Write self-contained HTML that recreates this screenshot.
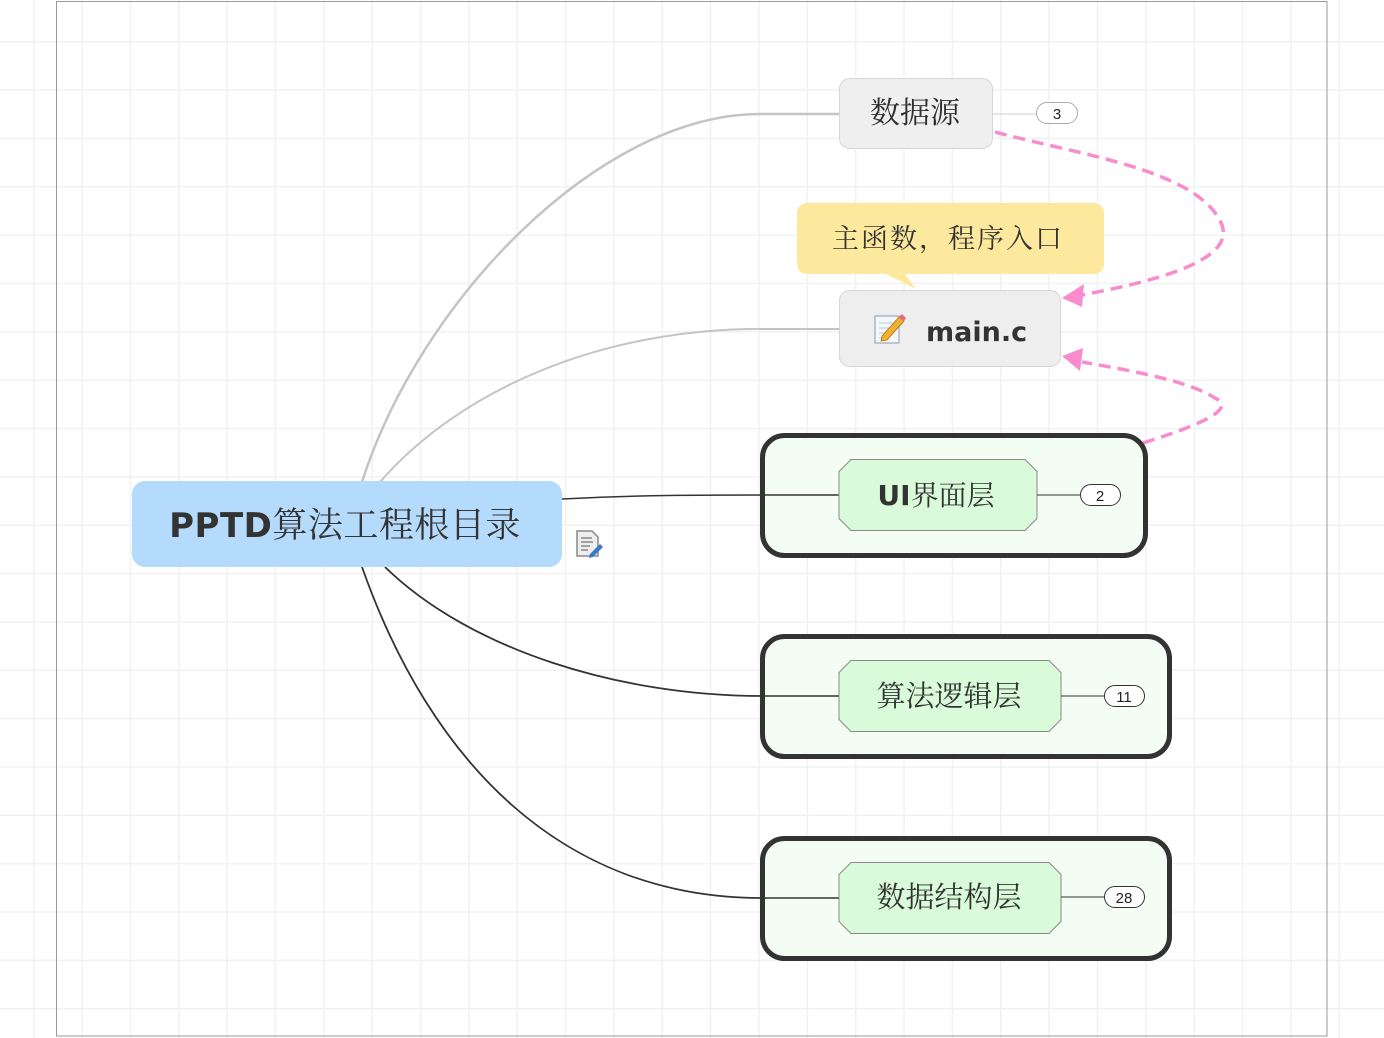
<!DOCTYPE html>
<html><head><meta charset="utf-8"><style>
html,body{margin:0;padding:0;background:#fff;}
svg{display:block}
.cjk{font-family:"Liberation Serif","Noto Serif CJK SC","Noto Serif CJK JP","AR PL UMing CN",serif;fill:#333}
</style></head><body>
<svg width="1384" height="1038" viewBox="0 0 1384 1038" xmlns="http://www.w3.org/2000/svg">
<defs>
<pattern id="g" x="33" y="41" width="48.35" height="48.35" patternUnits="userSpaceOnUse">
<path d="M0 0V48.35M0 0H48.35" stroke="#f0f2f2" stroke-width="3" fill="none"/>
</pattern>
</defs>
<rect width="1384" height="1038" fill="#fff"/>
<rect x="-1" y="-1" width="1390" height="1045" fill="url(#g)"/>
<rect x="56.5" y="1.5" width="1270.5" height="1034.5" fill="none" stroke="#999" stroke-width="1"/>

<path d="M362 482 C420 300 600 114 760 114 L839 114" stroke="#c4c4c4" stroke-width="2.5" fill="none"/>
<path d="M380 482 C460 390 600 329 760 329 L839 329" stroke="#c4c4c4" stroke-width="2" fill="none"/>
<path d="M562 499 C640 495 700 495 762 495 L839 495" stroke="#333" stroke-width="1.5" fill="none"/>
<path d="M385 567 C470 650 620 696 762 696 L839 696" stroke="#333" stroke-width="1.8" fill="none"/>
<path d="M362 567 C430 760 560 898 762 898 L839 898" stroke="#333" stroke-width="1.8" fill="none"/>
<path d="M993 114 H1036" stroke="#ccc" stroke-width="1"/>

<rect x="132" y="481" width="430" height="86" rx="13" fill="#b4dafc"/>
<text x="345" y="537" text-anchor="middle" font-size="34" font-weight="bold" style="font-family:'DejaVu Sans','Noto Sans CJK SC',sans-serif" fill="#333" letter-spacing="0.5">PPTD<tspan font-weight="normal" font-size="35" style="font-family:'Liberation Serif','Noto Serif CJK SC','Noto Serif CJK JP',serif">算法工程根目录</tspan></text>
<g transform="translate(576,530)">
<path d="M1 1h15l6 6v19H1z" fill="#eee" stroke="#888" stroke-width="1.5"/>
<path d="M5 8h11M5 12h12M5 16h9M5 20h7" stroke="#888" stroke-width="1.5"/>
<path d="M14 24l10-10 3 3-10 10-4 1z" fill="#3a78c8"/>
</g>

<rect x="839.5" y="78.5" width="153" height="70" rx="10" fill="#efefef" stroke="#d6d6d6"/>
<text x="915" y="123" text-anchor="middle" font-size="30" class="cjk" style="fill:#2f2f2f">数据源</text>
<rect x="1036.5" y="102.5" width="41" height="21" rx="10.5" fill="#fff" stroke="#aaa"/>
<text x="1057" y="119" text-anchor="middle" font-size="15" font-family="Liberation Sans,sans-serif" fill="#222">3</text>

<path d="M807 203 H1094 a10 10 0 0 1 10 10 V264 a10 10 0 0 1 -10 10 H905 L916 289 L886 274 H807 a10 10 0 0 1 -10 -10 V213 a10 10 0 0 1 10 -10z" fill="#fde99d"/>
<text x="948" y="248" text-anchor="middle" font-size="27" class="cjk" letter-spacing="2">主函数，程序入口</text>

<rect x="839.5" y="290.5" width="221" height="76" rx="10" fill="#eeeeee" stroke="#d6d6d6"/>
<g transform="translate(875,313)">
<rect x="0" y="3" width="24" height="27" fill="#f4f8fc" stroke="#9ab" stroke-width="1.2"/>
<path d="M4 10h14M4 15h14M4 20h12M4 25h10" stroke="#bcc" stroke-width="1"/>
<path d="M7 23 L24 4 L29 8 L12 27 L6 28z" fill="#f0b030" stroke="#b07010" stroke-width="0.8"/>
<path d="M24 4 L27 1 L31 5 L29 8z" fill="#e76a8a"/>
</g>
<text x="926" y="341" font-size="27" font-weight="bold" font-family="DejaVu Sans,sans-serif" fill="#333">main.c</text>

<path d="M995 132 C1080 155 1200 170 1222 225 C1235 262 1150 282 1082 295" stroke="#f98ccd" stroke-width="3.5" stroke-dasharray="12 7" fill="none"/>
<path d="M1062 298 L1084 284 L1082 307z" fill="#f98ccd"/>
<path d="M1143 443 C1190 428 1240 410 1215 398 C1190 382 1140 372 1082 362" stroke="#f98ccd" stroke-width="3.5" stroke-dasharray="12 7" fill="none"/>
<path d="M1062 356 L1083 348 L1080 371z" fill="#f98ccd"/>

<rect x="762.5" y="435.5" width="383" height="120" rx="22" fill="#f3fdf3" stroke="#333" stroke-width="5"/>
<path d="M762 495 H839" stroke="#333" stroke-width="1.5"/>
<path d="M851 459.5 H1025 L1037 471.5 V518.5 L1025 530.5 H851 L839 518.5 V471.5z" fill="#d9fbd9" stroke="#8a8a8a"/>
<text x="936" y="505" text-anchor="middle" font-size="28" font-weight="bold" font-family="DejaVu Sans,sans-serif" fill="#333">UI<tspan font-weight="normal" style="font-family:'Liberation Serif','Noto Serif CJK SC','Noto Serif CJK JP',serif">界面层</tspan></text>
<path d="M1037 495 H1080" stroke="#333" stroke-width="1"/>
<rect x="1080.5" y="484.5" width="40" height="21" rx="10.5" fill="#fff" stroke="#333"/>
<text x="1100" y="501" text-anchor="middle" font-size="15" font-family="Liberation Sans,sans-serif" fill="#222">2</text>

<rect x="762.5" y="636.5" width="407" height="120" rx="22" fill="#f3fdf3" stroke="#333" stroke-width="5"/>
<path d="M762 696 H839" stroke="#333" stroke-width="1.5"/>
<path d="M851 660.5 H1049 L1061 672.5 V719.5 L1049 731.5 H851 L839 719.5 V672.5z" fill="#d9fbd9" stroke="#8a8a8a"/>
<text x="949" y="706" text-anchor="middle" font-size="29" class="cjk">算法逻辑层</text>
<path d="M1061 696 H1104" stroke="#333" stroke-width="1"/>
<rect x="1104.5" y="685.5" width="40" height="21" rx="10.5" fill="#fff" stroke="#333"/>
<text x="1124" y="702" text-anchor="middle" font-size="15" font-family="Liberation Sans,sans-serif" fill="#222">11</text>

<rect x="762.5" y="838.5" width="407" height="120" rx="22" fill="#f3fdf3" stroke="#333" stroke-width="5"/>
<path d="M762 898 H839" stroke="#333" stroke-width="1.5"/>
<path d="M851 862.5 H1049 L1061 874.5 V921.5 L1049 933.5 H851 L839 921.5 V874.5z" fill="#d9fbd9" stroke="#8a8a8a"/>
<text x="949" y="907" text-anchor="middle" font-size="29" class="cjk">数据结构层</text>
<path d="M1061 897 H1104" stroke="#333" stroke-width="1"/>
<rect x="1104.5" y="886.5" width="40" height="21" rx="10.5" fill="#fff" stroke="#333"/>
<text x="1124" y="903" text-anchor="middle" font-size="15" font-family="Liberation Sans,sans-serif" fill="#222">28</text>
</svg>
</body></html>
